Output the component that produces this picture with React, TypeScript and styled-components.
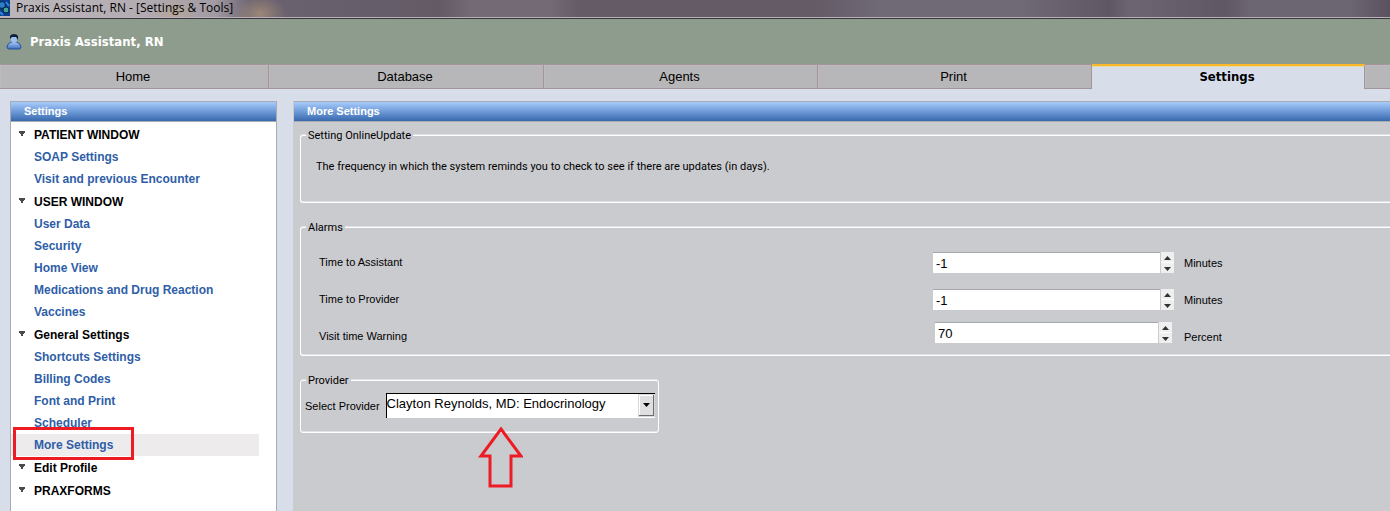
import React, { useState } from "react";
import styled, { createGlobalStyle } from "styled-components";

const sans = `"Liberation Sans", Arial, sans-serif`;
const line = "#a9acb2";
const page = "#d7deea";
const panel = "#cacbcf";
const red = "#ed1c24";

const GlobalStyle = createGlobalStyle`
  * { box-sizing: border-box; }
  body { margin: 0; background: ${page}; font-family: ${sans}; color: #000; }
  button, input, select { font-family: inherit; color: inherit; border-radius: 0; }
`;

const Window = styled.div`
  display: flex;
  flex-direction: column;
  min-height: 100vh;
`;

const TitleBar = styled.div`
  display: flex;
  align-items: center;
  gap: 6px;
  height: 19px;
  padding-bottom: 2px;
  border-bottom: 1px solid #3c3540;
  box-shadow: inset 0 -1px 0 #b9b2b8;
  font: 12px/16px "Open Sans", sans-serif;
  white-space: nowrap;
  background:
    radial-gradient(ellipse 22px 16px at 175px 14px, rgba(190, 165, 140, 0.7), transparent),
    radial-gradient(ellipse 26px 18px at 260px 14px, rgba(190, 160, 125, 0.6), transparent),
    linear-gradient(90deg, #bcb7bb 0, #b3adb3 140px, #a29ba3 215px, #6b6370 250px, #635a66 440px,
      #736a76 470px, #736a76 550px, #645b67 580px, #645b67 820px, #706976 880px, #706976 1020px,
      #5f5763 1110px, #6d6572 1130px, #5f5763 1225px, #6c6572 1250px, #6c6572 1350px, #5a525e 1390px);
`;

const UserBar = styled.header`
  display: flex;
  align-items: center;
  gap: 8px;
  height: 45px;
  padding-left: 6px;
  background: #8e9c8e;
`;

const UserName = styled.h1`
  margin: 0;
  color: #fff;
  font: bold 13px/16px "DejaVu Sans Condensed", Verdana, sans-serif;
`;

const Tabs = styled.nav`
  display: grid;
  grid-template-columns: 269fr 275fr 274fr 274fr 273fr 25fr;
  height: 25px;
`;

const Tab = styled.button<{ $active?: boolean }>`
  padding: 0 2px 0 0;
  border: solid #a39598;
  border-width: 1px 1px 1px 0;
  background: #b7b6b8;
  box-shadow: inset 1px 1px 0 #bfbabc;
  font-size: 13px;
  line-height: 16px;
  &:last-child { border-right: 0; }
  ${(p) =>
    p.$active &&
    `
    padding-bottom: 2px;
    border-top: 2px solid #fbb829;
    border-bottom: 0;
    background: ${page};
    box-shadow: inset 0 1px 0 #e5d9a8;
    font: bold 13px/16px "DejaVu Sans Condensed", Tahoma, sans-serif;
  `}
`;

const Body = styled.div`
  flex: 1;
  display: grid;
  grid-template-columns: 267px 1fr;
  gap: 16px;
  padding: 12px 0 0 10px;
`;

const Panel = styled.section<{ $fill: string; $open?: boolean }>`
  border: solid ${(p) => (p.$open ? p.$fill : line)};
  border-width: 0 ${(p) => (p.$open ? 0 : 1)}px 0 1px;
  background: ${(p) => p.$fill};
`;

const PanelTitle = styled.h2`
  margin: 0;
  height: 21px;
  padding-left: 13px;
  border: solid ${line};
  border-width: 1px 0;
  background: linear-gradient(#a8cbfb, #6f9bd8 50%, #3868ae);
  color: #fff;
  font: bold 11px/19px ${sans};
`;

const Tree = styled.div`
  padding-top: 1px;
  font-weight: bold;
  font-size: 12px;
`;

const Group = styled.button`
  display: flex;
  align-items: center;
  gap: 9px;
  width: 100%;
  height: 23px;
  padding: 0 0 0 8px;
  border: 0;
  background: none;
  font: inherit;
`;

const GroupMark = styled.svg`
  width: 6px;
  height: 5px;
  margin-bottom: 2px;
`;

const Item = styled.a<{ $active?: boolean }>`
  position: relative;
  display: block;
  height: 22px;
  margin-right: 17px;
  padding-left: 23px;
  line-height: 22px;
  color: #2f5ea8;
  text-decoration: none;
  background: ${(p) => (p.$active ? "#edebec" : "none")};
`;

const Callout = styled.span`
  position: absolute;
  left: 2px;
  top: -7px;
  width: 121px;
  height: 33px;
  border: 3px solid ${red};
`;

const Settings = styled.form`
  display: flex;
  flex-direction: column;
  gap: 17px;
  padding: 6px 0 0 6px;
`;

const Box = styled.fieldset<{ $height: number; $width?: number }>`
  position: relative;
  min-width: 0;
  min-height: ${(p) => p.$height}px;
  width: ${(p) => (p.$width ? `${p.$width}px` : "auto")};
  margin: 0;
  padding: 0;
  border: 1px solid #fff;
  border-right-width: ${(p) => (p.$width ? 1 : 0)}px;
  border-radius: ${(p) => (p.$width ? "3px" : "3px 0 0 3px")};
  box-shadow: 0 -1px 0 #dde2e6, inset 0 -1px 0 #dde2e6;
  font-size: 11px;
`;

const Legend = styled.legend`
  height: 15px;
  margin-left: 5px;
  padding: 0 2px;
  background: ${panel};
  font-family: Roboto, sans-serif;
  line-height: 15px;
`;

const Note = styled.p`
  margin: 0;
  padding: 16px 0 0 15px;
  font-family: Roboto, sans-serif;
  line-height: 15px;
`;

const Alarms = styled.div`
  padding-top: 8px;
`;

const AlarmRow = styled.div`
  display: grid;
  grid-template-columns: 614fr 241fr 216fr;
  align-items: center;
  height: 37px;
  padding-left: 18px;
`;

const Spinner = styled.div<{ $inset?: boolean }>`
  display: flex;
  gap: 1px;
  height: 21px;
  margin: ${(p) => (p.$inset ? "0 2px 6px" : "2px 0 0")};
`;

const NumberInput = styled.input`
  flex: 1;
  min-width: 0;
  padding: 0 3px;
  border: 0;
  border-top: 1px solid #a5a8ad;
  background: #fff;
  font-size: 13px;
  appearance: textfield;
  &::-webkit-inner-spin-button { appearance: none; }
`;

const Steps = styled.span`
  display: flex;
  flex-direction: column;
  width: 13px;
`;

const Step = styled.button`
  flex: 1;
  display: flex;
  align-items: center;
  justify-content: center;
  padding: 2px 0 0;
  border: 0;
  background: #efeff0;
  &:last-child { border-top: 1px solid #fff; }
`;

const Unit = styled.span`
  padding: 3px 0 0 10px;
`;

const ProviderRow = styled.div`
  display: flex;
  align-items: center;
  gap: 6px;
  padding: 5px 3px 0 4px;
`;

const SelectWrap = styled.div`
  position: relative;
  flex: 1;
`;

const Select = styled.select`
  display: block;
  width: 100%;
  height: 25px;
  padding: 0 18px 5px 0;
  border: solid #000;
  border-width: 1px 0 0 1px;
  appearance: none;
  background: #fff;
  font-size: 13px;
`;

const DropMark = styled.span`
  position: absolute;
  top: 2px;
  right: 1px;
  display: flex;
  align-items: center;
  justify-content: center;
  width: 15px;
  height: 21px;
  border: solid #6c6c70;
  border-width: 0 1px 1px 0;
  box-shadow: inset 1px 1px 0 #fff, 0 0 0 1px #d8d8dc;
  background: #dfdfe2;
  pointer-events: none;
`;

const Pointer = styled.svg`
  position: absolute;
  left: 177px;
  top: 38px;
  width: 45px;
  height: 63px;
`;

const groups = [
  { name: "PATIENT WINDOW", items: ["SOAP Settings", "Visit and previous Encounter"] },
  {
    name: "USER WINDOW",
    items: ["User Data", "Security", "Home View", "Medications and Drug Reaction", "Vaccines"],
  },
  {
    name: "General Settings",
    items: ["Shortcuts Settings", "Billing Codes", "Font and Print", "Scheduler", "More Settings"],
  },
  { name: "Edit Profile", items: [] },
  { name: "PRAXFORMS", items: [] },
];

function AppIcon() {
  return (
    <svg width="10" height="16" viewBox="0 0 10 16" aria-hidden="true">
      <rect width="10" height="16" fill="#0b3f8e" />
      <circle cx="2" cy="5" r="3.500" fill="#2a7fc4" stroke="#06204a" />
      <circle cx="6" cy="10" r="3" fill="#3fa58e" stroke="#06204a" />
      <path d="M0 12l3 3M6 2l3 4" stroke="#2f86e0" strokeWidth="2" />
    </svg>
  );
}

function PersonIcon() {
  return (
    <svg width="16" height="17" viewBox="0 0 16 17" aria-hidden="true">
      <defs>
        <linearGradient id="coat" x2="0" y2="1">
          <stop stopColor="#a9c8f2" />
          <stop offset="1" stopColor="#3e6fc0" />
        </linearGradient>
      </defs>
      <path d="M1 14q0-3 4-5h6q4 2 4 5 0 2-2 2H3q-2 0-2-2z" fill="url(#coat)" stroke="#27509c" />
      <path d="M5 4h6v3q0 3-3 3T5 7z" fill="#9dbfee" />
      <path d="M4 6V3q1-2 4-2t4 2v4l-2-3H6z" fill="#10203c" />
    </svg>
  );
}

type AlarmProps = { id: string; label: string; initial: number; unit: string; inset?: boolean };

function Alarm({ id, label, initial, unit, inset }: AlarmProps) {
  const [value, setValue] = useState(initial);
  return (
    <AlarmRow>
      <label htmlFor={id}>{label}</label>
      <Spinner $inset={inset}>
        <NumberInput id={id} type="number" value={value} onChange={(e) => setValue(Number(e.target.value))} />
        <Steps>
          <Step type="button" aria-label="Increase" onClick={() => setValue(value + 1)}>
            <svg width="7" height="4" viewBox="0 0 7 4"><path d="M0 4L3.500 0 7 4z" fill="#333" /></svg>
          </Step>
          <Step type="button" aria-label="Decrease" onClick={() => setValue(value - 1)}>
            <svg width="7" height="4" viewBox="0 0 7 4"><path d="M0 0h7L3.500 4z" fill="#333" /></svg>
          </Step>
        </Steps>
      </Spinner>
      <Unit>{unit}</Unit>
    </AlarmRow>
  );
}

export default function App() {
  return (
    <Window>
      <GlobalStyle />
      <TitleBar>
        <AppIcon />
        Praxis Assistant, RN - [Settings &amp; Tools]
      </TitleBar>
      <UserBar>
        <PersonIcon />
        <UserName>Praxis Assistant, RN</UserName>
      </UserBar>
      <Tabs>
        <Tab>Home</Tab>
        <Tab>Database</Tab>
        <Tab>Agents</Tab>
        <Tab>Print</Tab>
        <Tab $active>Settings</Tab>
        <Tab aria-label="More tabs" />
      </Tabs>
      <Body>
        <Panel $fill="#fff">
          <PanelTitle>Settings</PanelTitle>
          <Tree>
            {groups.map((group) => (
              <div key={group.name}>
                <Group type="button">
                  <GroupMark viewBox="0 0 6 5"><path d="M0 0h6v2H5v1H4v2H2V3H1V2H0z" fill="#4a4a4a" /></GroupMark>
                  {group.name}
                </Group>
                {group.items.map((item) => (
                  <Item key={item} href="#" $active={item === "More Settings"}>
                    {item}
                    {item === "More Settings" && <Callout />}
                  </Item>
                ))}
              </div>
            ))}
          </Tree>
        </Panel>
        <Panel $fill={panel} $open>
          <PanelTitle>More Settings</PanelTitle>
          <Settings>
            <Box $height={75}>
              <Legend>Setting OnlineUpdate</Legend>
              <Note>The frequency in which the system reminds you to check to see if there are updates (in days).</Note>
            </Box>
            <Box $height={136}>
              <Legend>Alarms</Legend>
              <Alarms>
                <Alarm id="assistant" label="Time to Assistant" initial={-1} unit="Minutes" />
                <Alarm id="provider-time" label="Time to Provider" initial={-1} unit="Minutes" />
                <Alarm id="visit" label="Visit time Warning" initial={70} unit="Percent" inset />
              </Alarms>
            </Box>
            <Box $height={60} $width={359}>
              <Legend>Provider</Legend>
              <ProviderRow>
                <label htmlFor="provider">Select Provider</label>
                <SelectWrap>
                  <Select id="provider">
                    <option>Clayton Reynolds, MD: Endocrinology</option>
                  </Select>
                  <DropMark>
                    <svg width="7" height="4" viewBox="0 0 7 4"><path d="M0 0h7L3.500 4z" /></svg>
                  </DropMark>
                </SelectWrap>
              </ProviderRow>
              <Pointer viewBox="0 0 45 63" aria-hidden="true">
                <path d="M23 3L43 30H33V60H12V30H3z" fill="none" stroke={red} strokeWidth="3" />
              </Pointer>
            </Box>
          </Settings>
        </Panel>
      </Body>
    </Window>
  );
}
